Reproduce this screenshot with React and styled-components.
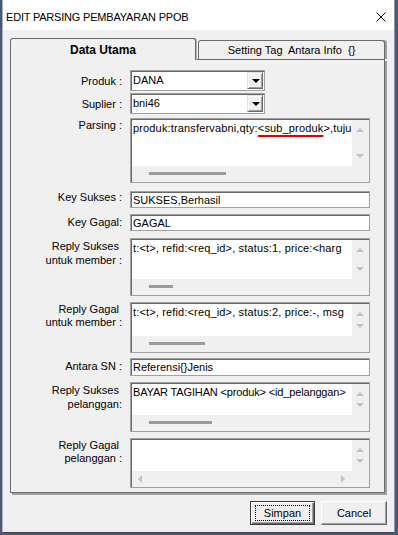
import React from "react";
import styled, { createGlobalStyle, css } from "styled-components";

const GlobalStyle = createGlobalStyle`
  html, body { margin: 0; padding: 0; }
  body {
    background: #4a5a76;
    font-family: "Liberation Sans", Arial, sans-serif;
    font-size: 11px;
    color: #000;
  }
  * { box-sizing: border-box; }
`;

const sunken = css`
  border: 1px solid #a0a0a0;
  box-shadow: inset 1px 1px 0 #696969;
`;

const Window = styled.div`
  width: 393px;
  height: 533px;
  margin-left: 2px;
  background: #f0f0f0;
  border-left: 1px solid #a9b0bc;
  border-right: 1px solid #8d96a6;
  border-bottom: 1px solid #3a4256;
  display: flex;
  flex-direction: column;
`;

const TitleBar = styled.div`
  height: 30px;
  flex: none;
  background: #fff;
  display: flex;
  align-items: center;
  justify-content: space-between;
  padding: 3px 8px 0 3px;
`;

const Title = styled.span`
  font-size: 11px;
  letter-spacing: -0.2px;
  color: #000;
`;

const Body = styled.div`
  flex: 1;
  padding: 8px 0 0 7px;
`;

const TabStrip = styled.div`
  display: flex;
  align-items: flex-end;
  height: 21px;
  position: relative;
  z-index: 1;
`;

const Tab = styled.div`
  width: ${(p) => p.$w}px;
  height: ${(p) => (p.$active ? 22 : 19)}px;
  margin-bottom: ${(p) => (p.$active ? -1 : 0)}px;
  margin-right: ${(p) => (p.$active ? 2 : 0)}px;
  background: #f0f0f0;
  border: 1px solid #6b6b6b;
  border-bottom: none;
  border-radius: 3px 3px 0 0;
  box-shadow: ${(p) => (p.$active ? "1px 0 0 #b4b4b4" : "2px 0 0 #a0a0a0")};
  display: flex;
  align-items: center;
  justify-content: center;
  font-size: ${(p) => (p.$active ? 12 : 11)}px;
  font-weight: ${(p) => (p.$active ? "bold" : "normal")};
  white-space: pre;
`;

const Panel = styled.div`
  width: 375px;
  height: 434px;
  border: 1px solid #6b6b6b;
  box-shadow: 2px 2px 0 #a0a0a0;
  padding-top: 10px;
`;

const Row = styled.div`
  display: flex;
  margin-top: ${(p) => p.$mt || 0}px;
`;

const Label = styled.div`
  width: 111px;
  flex: none;
  text-align: right;
  white-space: pre;
  line-height: ${(p) => p.$lh || 13}px;
  padding-top: ${(p) => p.$pt || 0}px;
  margin-right: 8px;
`;

const Combo = styled.div`
  width: 135px;
  height: 21px;
  ${sunken}
  background: #fff;
  padding: 1px;
  display: flex;
`;

const ComboText = styled.div`
  flex: 1;
  line-height: 17px;
  padding-left: 1px;
`;

const ComboButton = styled.div`
  width: 16px;
  background: #f0f0f0;
  border-top: 1px solid #e3e3e3;
  border-left: 1px solid #e3e3e3;
  border-right: 1px solid #696969;
  border-bottom: 1px solid #696969;
  box-shadow: inset 1px 1px 0 #fff, inset -1px -1px 0 #a0a0a0;
  display: flex;
  align-items: center;
  justify-content: center;
  &::after {
    content: "";
    border-left: 4px solid transparent;
    border-right: 4px solid transparent;
    border-top: 4px solid #000;
    margin-left: 1px;
  }
`;

const TextInput = styled.div`
  width: 240px;
  height: ${(p) => p.$h}px;
  ${sunken}
  background: #fff;
  padding: 1px 0 0 2px;
  line-height: ${(p) => p.$h - 3}px;
  white-space: nowrap;
  overflow: hidden;
`;

const Memo = styled.div`
  width: 240px;
  height: ${(p) => p.$h}px;
  ${sunken}
  background: #f0f0f0;
  padding: 1px 0 0 1px;
  display: grid;
  grid-template-columns: 220px 17px;
  grid-template-rows: 1fr 16px;
`;

const MemoText = styled.div`
  background: #fff;
  padding: 2px 0 0 1px;
  line-height: 13px;
  letter-spacing: ${(p) => (p.$ls === undefined ? 0.15 : p.$ls)}px;
  white-space: pre;
  overflow: hidden;
`;

const Marked = styled.span`
  text-decoration: underline;
  text-decoration-color: #e00000;
  text-decoration-thickness: 2px;
  text-underline-offset: 3px;
`;

const VScroll = styled.div`
  display: flex;
  flex-direction: column;
  justify-content: space-between;
  align-items: center;
  padding: 8px 1px 8px 0;
`;

const Arrow = styled.span`
  width: 0;
  height: 0;
  ${(p) =>
    p.$dir === "up" &&
    css`
      border-left: 4px solid transparent;
      border-right: 4px solid transparent;
      border-bottom: 4px solid #c2c2c2;
    `}
  ${(p) =>
    p.$dir === "down" &&
    css`
      border-left: 4px solid transparent;
      border-right: 4px solid transparent;
      border-top: 4px solid #c2c2c2;
    `}
  ${(p) =>
    p.$dir === "left" &&
    css`
      border-top: 4px solid transparent;
      border-bottom: 4px solid transparent;
      border-right: 4px solid #c2c2c2;
    `}
  ${(p) =>
    p.$dir === "right" &&
    css`
      border-top: 4px solid transparent;
      border-bottom: 4px solid transparent;
      border-left: 4px solid #c2c2c2;
    `}
`;

const HScroll = styled.div`
  display: flex;
  align-items: center;
  justify-content: ${(p) => (p.$arrows ? "space-between" : "flex-start")};
  padding: ${(p) => (p.$arrows ? "0 7px 1px 6px" : "0 0 1px 17px")};
`;

const Thumb = styled.span`
  width: ${(p) => p.$w}px;
  height: 3px;
  background: #9a9a9a;
`;

const ButtonRow = styled.div`
  display: flex;
  justify-content: flex-end;
  gap: 6px;
  margin-top: 8px;
  padding-right: 7px;
`;

const Button = styled.div`
  width: ${(p) => p.$w}px;
  height: 24px;
  background: #f0f0f0;
  display: flex;
  align-items: center;
  justify-content: center;
  font-size: 11px;
  ${(p) =>
    p.$default
      ? css`
          border: 1px solid #3c3c3c;
          box-shadow: inset 1px 1px 0 #fff, inset -1px -1px 0 #696969,
            inset -2px -2px 0 #a0a0a0;
          padding: 3px 4px;
        `
      : css`
          border-top: 1px solid #fff;
          border-left: 1px solid #fff;
          border-right: 1px solid #696969;
          border-bottom: 1px solid #696969;
          box-shadow: inset -1px -1px 0 #a0a0a0;
        `}
`;

const Focus = styled.span`
  flex: 1;
  align-self: stretch;
  display: flex;
  align-items: center;
  justify-content: center;
  border: 1px dotted #000;
`;

function Scrolls({ thumb, hArrows }) {
  return (
    <>
      <VScroll>
        <Arrow $dir="up" />
        <Arrow $dir="down" />
      </VScroll>
      <HScroll $arrows={hArrows}>
        {hArrows ? (
          <>
            <Arrow $dir="left" />
            <Arrow $dir="right" />
          </>
        ) : (
          thumb && <Thumb $w={thumb} />
        )}
      </HScroll>
    </>
  );
}

export default function App() {
  return (
    <>
      <GlobalStyle />
      <Window>
        <TitleBar>
          <Title>EDIT PARSING PEMBAYARAN PPOB</Title>
          <svg width="10" height="10" viewBox="0 0 10 10">
            <path d="M0.5 0.5L9.5 9.5M9.5 0.5L0.5 9.5" stroke="#000" strokeWidth="1" />
          </svg>
        </TitleBar>
        <Body>
          <TabStrip>
            <Tab $active $w={186}>Data Utama</Tab>
            <Tab $w={187}>{"Setting Tag  Antara Info  {}"}</Tab>
          </TabStrip>
          <Panel>
            <Row>
              <Label $pt={5}>Produk :</Label>
              <Combo>
                <ComboText>DANA</ComboText>
                <ComboButton />
              </Combo>
            </Row>
            <Row $mt={2}>
              <Label $pt={5}>Suplier :</Label>
              <Combo>
                <ComboText>bni46</ComboText>
                <ComboButton />
              </Combo>
            </Row>
            <Row $mt={4}>
              <Label $pt={1}>Parsing :</Label>
              <Memo $h={65}>
                <MemoText>
                  produk:transfervabni,qty:<Marked>{"<sub_produk"}</Marked>
                  {">,tuju"}
                </MemoText>
                <Scrolls thumb={77} />
              </Memo>
            </Row>
            <Row $mt={8}>
              <Label>Key Sukses :</Label>
              <TextInput $h={17}>SUKSES,Berhasil</TextInput>
            </Row>
            <Row $mt={6}>
              <Label $pt={2}>Key Gagal:</Label>
              <TextInput $h={17}>GAGAL</TextInput>
            </Row>
            <Row $mt={7}>
              <Label $pt={1} $lh={14}>{"Reply Sukses \nuntuk member :"}</Label>
              <Memo $h={58}>
                <MemoText>{"t:<t>, refid:<req_id>, status:1, price:<harg"}</MemoText>
                <Scrolls thumb={24} />
              </Memo>
            </Row>
            <Row $mt={6}>
              <Label $pt={1}>{"Reply Gagal \nuntuk member :"}</Label>
              <Memo $h={51}>
                <MemoText>{"t:<t>, refid:<req_id>, status:2, price:-, msg"}</MemoText>
                <Scrolls thumb={56} />
              </Memo>
            </Row>
            <Row $mt={5}>
              <Label $pt={2}>Antara SN :</Label>
              <TextInput $h={18}>{"Referensi{}Jenis"}</TextInput>
            </Row>
            <Row $mt={6}>
              <Label $pt={1} $lh={14}>{"Reply Sukses \npelanggan:"}</Label>
              <Memo $h={50}>
                <MemoText $ls={-0.15}>{"BAYAR TAGIHAN <produk> <id_pelanggan>"}</MemoText>
                <Scrolls thumb={63} />
              </Memo>
            </Row>
            <Row $mt={6}>
              <Label $pt={1}>{"Reply Gagal \npelanggan :"}</Label>
              <Memo $h={50}>
                <MemoText />
                <Scrolls hArrows />
              </Memo>
            </Row>
          </Panel>
          <ButtonRow>
            <Button $default $w={65}>
              <Focus>Simpan</Focus>
            </Button>
            <Button $w={66}>Cancel</Button>
          </ButtonRow>
        </Body>
      </Window>
    </>
  );
}
